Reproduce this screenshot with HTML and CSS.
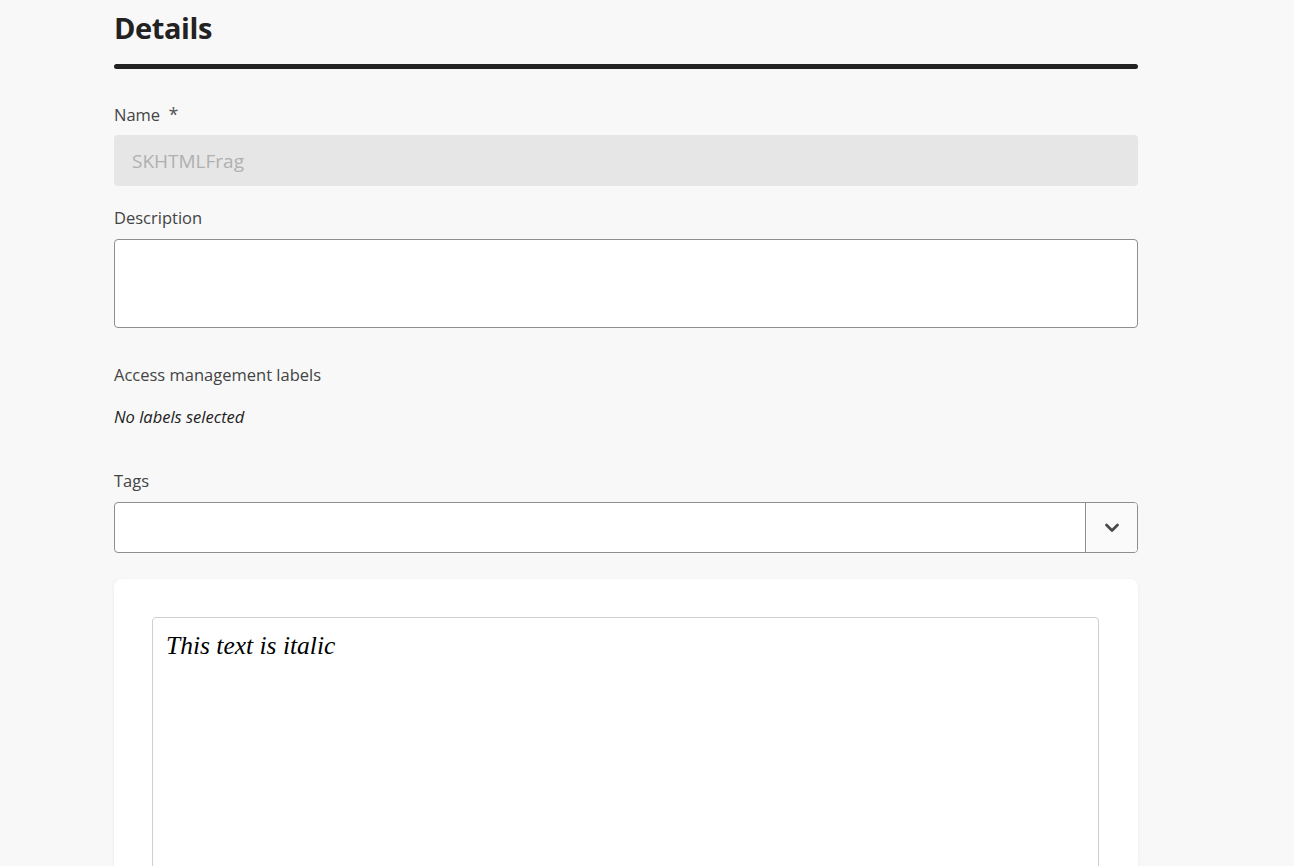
FILE: index.html
```html
<!DOCTYPE html>
<html>
<head>
<meta charset="utf-8">
<link rel="stylesheet" href="styles.css">
</head>
<body>
<main class="page">
  <h1 class="title">Details</h1>
  <div class="rule"></div>

  <div class="field">
    <label class="label">Name <span class="req">*</span></label>
    <div class="input disabled">SKHTMLFrag</div>
  </div>

  <div class="field">
    <label class="label">Description</label>
    <div class="textarea"></div>
  </div>

  <div class="field access">
    <div class="label">Access management labels</div>
    <div class="none">No labels selected</div>
  </div>

  <div class="field tags">
    <label class="label">Tags</label>
    <div class="combo">
      <div class="combo-input"></div>
      <div class="combo-btn">
        <svg width="16" height="10" viewBox="0 0 16 10"><path d="M2.5 2 L8 7.5 L13.5 2" fill="none" stroke="#4b4b4b" stroke-width="2.8" stroke-linecap="round" stroke-linejoin="round"/></svg>
      </div>
    </div>
  </div>

  <section class="card">
    <div class="frame">
      <p class="italic">This text is italic</p>
    </div>
  </section>
</main>
</body>
</html>
```
FILE: styles.css
```css
html, body {
  margin: 0;
  padding: 0;
  background: #f8f8f8;
  height: 866px;
  overflow: hidden;
}
body {
  font-family: "Open Sans", "Lato", sans-serif;
  color: #222;
}
.page {
  width: 1024px;
  margin-left: 114px;
  display: flex;
  flex-direction: column;
}
.title {
  margin: 8px 0 0 0;
  font-size: 29px;
  font-weight: 700;
  line-height: 40px;
  letter-spacing: -0.4px;
  color: #222;
}
.rule {
  margin-top: 16px;
  height: 5px;
  border-radius: 3px;
  background: #222;
}
.field {
  display: flex;
  flex-direction: column;
}
.label {
  font-size: 16.5px;
  color: #444;
  line-height: 22px;
}
.rule + .field { margin-top: 34px; }
.rule + .field .label { margin-bottom: 9px; }
.req { font-size: 18px; margin-left: 4px; color: #555; }
.input {
  height: 51px;
  border-radius: 4px;
  box-sizing: border-box;
  padding-left: 18px;
  display: flex;
  align-items: center;
  font-size: 19px;
}
.disabled {
  background: #e6e6e6;
  color: #b0b0b0;
}
.field + .field { margin-top: 21px; }
.field + .field .label { margin-bottom: 10px; }
.textarea {
  height: 89px;
  box-sizing: border-box;
  background: #fff;
  border: 1px solid #8e8e8e;
  border-radius: 4px;
}
.field.access { margin-top: 36px; }
.field.access .label { margin-bottom: 20px; }
.none {
  font-style: italic;
  font-size: 16.5px;
  color: #222;
  line-height: 22px;
}
.field.tags { margin-top: 42px; }
.combo {
  height: 51px;
  display: flex;
  box-sizing: border-box;
  border: 1px solid #8e8e8e;
  border-radius: 4px;
  background: #fff;
  overflow: hidden;
}
.combo-input { flex: 1; }
.combo-btn {
  width: 51px;
  border-left: 1px solid #8e8e8e;
  background: #fafafa;
  display: flex;
  align-items: center;
  justify-content: center;
}
.card {
  margin-top: 26px;
  height: 287px;
  overflow: hidden;
  background: #fff;
  border-radius: 8px 8px 0 0;
  box-shadow: 0 1px 4px rgba(0,0,0,0.06);
  padding: 38px 39px 0 38px;
  box-sizing: border-box;
}
.frame {
  height: 400px;
  border: 1px solid #cfcfcf;
  border-radius: 4px;
  background: #fff;
}
.italic {
  margin: 13px 0 0 13px;
  font-family: "Liberation Serif", "Times New Roman", serif;
  font-style: italic;
  font-size: 25.5px;
  color: #000;
}
```
